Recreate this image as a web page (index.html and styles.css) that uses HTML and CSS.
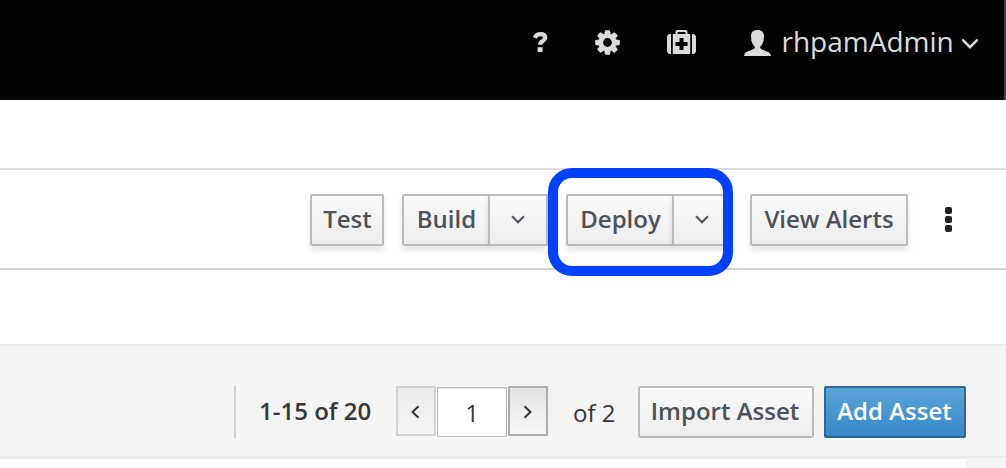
FILE: index.html
```html
<!DOCTYPE html>
<html lang="en">
<head>
<meta charset="utf-8">
<title>Assets</title>
<link rel="stylesheet" href="styles.css">
</head>
<body>
<header class="masthead">
  <svg class="help" width="16" height="20" viewBox="0 0 16 20"><path d="M1.700 5.800C2.900 3.400 4.700 2.200 7.300 2.200c3 0 4.900 1.300 4.900 3.600 0 3.400-5.100 3.200-5.100 7" fill="none" stroke="currentColor" stroke-width="4.300"/><path d="M4.600 15.200h5v4.800h-5z" fill="currentColor"/></svg>
  <svg class="gear" width="25" height="25" viewBox="-12.5 -12.5 25 25" fill="currentColor">
    <path fill-rule="evenodd" d="M-9 0a9 9 0 1 0 18 0a9 9 0 1 0-18 0M-4.400 0a4.400 4.400 0 1 1 8.800 0a4.400 4.400 0 1 1-8.800 0"/>
    <g id="teeth"><path id="tooth" d="M-3.200-8l.7-3.700q.1-.6.7-.6h3.600q.6 0 .7.6l.7 3.700z"/><use href="#tooth" transform="rotate(90)"/><use href="#tooth" transform="rotate(180)"/><use href="#tooth" transform="rotate(270)"/></g>
    <use href="#teeth" transform="rotate(45)"/>
  </svg>
  <svg class="kit" width="29" height="24" viewBox="0 0 29 24" fill="currentColor"><path d="M4 4v20H3.500Q0 24 0 20.500v-13Q0 4 3.500 4zM25 4v20h.5q3.500 0 3.500-3.500v-13Q29 4 25.500 4z"/><path fill-rule="evenodd" d="M5.800 4H8.500V1.800Q8.500 0 10.300 0h8.400q1.800 0 1.800 1.800V4H23.200v20H5.800zM10.500 2v2h8V2zM12.500 8v4h-4v4h4v4h4v-4h4v-4h-4V8z"/></svg>
  <svg class="user" width="27" height="26" viewBox="0 0 27 26" fill="currentColor"><path d="M13.500 0c4.300 0 6.500 2.300 6.500 6 0 1.300-.2 2.500-.5 3.300.6.4.4 1.700-.4 2.700-.4 1.900-1.500 3.500-2.900 4.500v1.600c1 2 7.500 2.700 9.600 5.200.8.900 1.100 1.700 1.200 2.700H0c.1-1 .4-1.800 1.200-2.700 2.100-2.500 8.600-3.200 9.600-5.200v-1.600c-1.400-1-2.500-2.600-2.900-4.500-.8-1-1-2.300-.4-2.700C7.200 8.500 7 7.300 7 6c0-3.700 2.200-6 6.500-6z"/></svg>
  <span class="username">rhpamAdmin</span>
  <svg class="caret" width="16" height="10" viewBox="0 0 16 10"><path d="M1.200 1.300 8 8.200l6.800-6.900" fill="none" stroke="currentColor" stroke-width="2.500" stroke-linecap="round"/></svg>
</header>
<nav class="toolbar">
  <button class="btn test">Test</button>
  <div class="group build"><button class="btn label">Build</button><button class="btn drop"><svg width="14" height="9" viewBox="0 0 14 9"><path d="M1 1.200 7 7.300l6-6.100"/></svg></button></div>
  <div class="group deploy"><button class="btn label">Deploy</button><button class="btn drop"><svg width="14" height="9" viewBox="0 0 14 9"><path d="M1 1.200 7 7.300l6-6.100"/></svg></button><span class="highlight"></span></div>
  <button class="btn alerts">View Alerts</button>
  <div class="kebab"><i></i><i></i><i></i></div>
</nav>
<section class="panel">
  <span class="divider"></span>
  <strong class="range">1-15 of 20</strong>
  <div class="pager">
    <button class="page prev"><svg width="9" height="14" viewBox="0 0 9 14"><path d="M7.500 1.200 1.500 7l6 5.800"/></svg></button>
    <input class="current" value="1" aria-label="Page">
    <button class="page next"><svg width="9" height="14" viewBox="0 0 9 14"><path d="m1.500 1.200 6 5.800-6 5.800"/></svg></button>
  </div>
  <span class="total">of 2</span>
  <button class="btn import">Import Asset</button>
  <button class="btn add">Add Asset</button>
</section>
<div class="list"><div class="rows"></div></div>
</body>
</html>
```
FILE: styles.css
```css
* { box-sizing: border-box; }
body { margin: 0; height: 468px; overflow: hidden; background: #fff; font-family: "Open Sans", sans-serif; font-size: 24px; color: #363636; }
svg { display: block; flex: none; }
button, input { font: inherit; margin: 0; padding: 0; }

.masthead { display: flex; align-items: flex-start; height: 100px; padding: 30px 26px 0 533px; background: #030303; border-right: 2px solid #444; color: #dbdbdb; }
.help { margin-top: 2px; }
.gear { margin-left: 46px; }
.kit { margin-left: 47px; }
.user { margin-left: 48px; }
.username { width: 180px; margin-left: 10.5px; margin-right: -.5px; margin-top: -7px; font-size: 28px; line-height: 36px; white-space: nowrap; }
.caret { margin-left: 1px; margin-top: 9px; }

.toolbar { display: flex; align-items: flex-start; height: 102px; margin-top: 68px; padding: 24px 0 0 310px; border-top: 2px solid #ddd; border-bottom: 2px solid #d1d1d1; }
.btn { flex: none; height: 52px; border: 2px solid #bbb; border-radius: 2px; background: linear-gradient(#fafafa, #ededed); box-shadow: 0 4px 6px rgba(3, 3, 3, .1); color: #4d5258; font-weight: 600; line-height: 46px; padding-bottom: 2px; white-space: nowrap; }
.test { width: 74px; padding-left: 1px; }
.group { display: flex; position: relative; }
.build { margin-left: 18px; }
.label { width: 88px; padding-left: 1px; border-radius: 2px 0 0 2px; }
.deploy { margin-left: 18px; }
.deploy .label { width: 108px; }
.drop { display: flex; align-items: center; justify-content: center; width: 60px; margin-left: -2px; padding-top: 1px; border-radius: 0; }
.drop svg, .page svg { fill: none; stroke: currentColor; stroke-width: 2; }
.highlight { position: absolute; left: -18px; top: -26px; width: 185px; height: 108px; border: 10px solid #0040ff; border-radius: 24px; }
.alerts { width: 158px; margin-left: 18px; }
.kebab { display: grid; gap: 2px; margin: 13px 0 0 37px; }
.kebab i { width: 7px; height: 7px; border-radius: 2px; background: #222; }

.panel { display: flex; align-items: flex-start; height: 114px; margin-top: 74px; padding: 40px 0 0 234px; background: #f4f4f4; border-top: 2px solid #ebebeb; border-bottom: 2px solid #ebebeb; }
.divider { width: 2px; height: 52px; background: #d1d1d1; }
.range { width: 137px; margin-left: 23px; font-weight: 600; line-height: 50px; white-space: nowrap; }
.pager { display: flex; }
.page { display: flex; align-items: center; justify-content: center; width: 40px; height: 50px; border: 2px solid #aeaeae; background: linear-gradient(#e2e2e2, #f7f7f7); color: #333; }
.page svg { margin: 2px 1px 0 0; }
.prev { border-color: #d1d1d1; background: linear-gradient(#ebebeb, #f5f5f5); }
.current { width: 70px; height: 50px; margin: 1px 1px 0; border: 1px solid #bbb; box-shadow: inset 0 1px 1px #ddd, 0 0 0 1px #fafafa; background: #fff; color: #363636; line-height: 48px; text-align: center; }
.total { width: 65px; margin-left: 25px; line-height: 54px; white-space: nowrap; }
.panel .btn { box-shadow: none; }
.import { width: 176px; padding-right: 2px; }
.panel .add { width: 142px; margin-left: 10px; padding-right: 1px; border-color: #2b669a; background: linear-gradient(#58a5d8, #3788ca); color: #fff; }
.list { height: 10px; background: #f4f4f4; }
.rows { width: 966px; height: 10px; border-top: 1px solid #ebebeb; background: #fff; }
```
